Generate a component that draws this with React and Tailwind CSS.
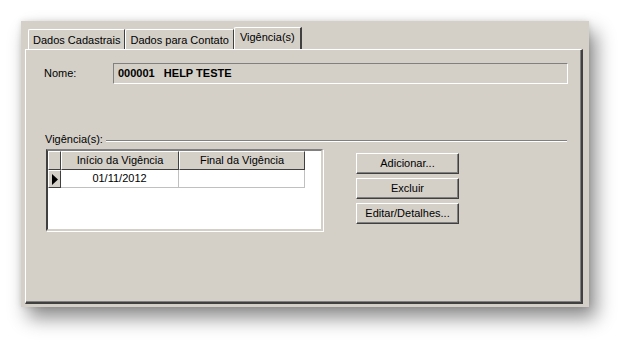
import React from "react";

const font = { fontFamily: '"Liberation Sans", Arial, sans-serif' };

function Tab({ label, active }) {
  if (active)
    return (
      <div className="relative z-10 -ml-[2px] h-[22px] px-[5px] pt-[1px] bg-[#d4d0c8] border-t border-l border-white border-r-2 border-r-[#404040] rounded-tl-[2px] text-[11px] leading-[16px]">
        {label}
      </div>
    );
  return (
    <div className="mt-[2px] h-[20px] px-[4px] pt-[3px] bg-[#d4d0c8] border-t border-l border-white border-r border-r-[#404040] rounded-tl-[2px] text-[11px] leading-[14px]">
      {label}
    </div>
  );
}

function Button({ children }) {
  return (
    <div className="w-[103px] h-[21px] flex items-center justify-center bg-[#d4d0c8] border-t border-l border-white border-b border-r border-b-[#404040] border-r-[#404040] shadow-[inset_-1px_-1px_0_#808080] text-[11px]">
      {children}
    </div>
  );
}

export default function App() {
  return (
    <div className="w-[630px] h-[349px] bg-white pl-[21px] pt-[21px] text-black" style={font}>
      <div className="w-[568px] h-[286px] bg-[#d4d0c8] pt-[6px] pl-[4px] pr-[6px] shadow-[7px_11px_18px_rgba(0,0,0,0.45),0_0_6px_rgba(0,0,0,0.12)]">
        <div className="flex pl-[3px] h-[22px]">
          <Tab label="Dados Cadastrais" />
          <Tab label="Dados para Contato" />
          <div className="ml-[2px]"><Tab label="Vigência(s)" active /></div>
        </div>

        <div className="h-[255px] border-t border-l border-white border-r-2 border-b-2 border-r-[#404040] border-b-[#404040] shadow-[inset_-1px_-1px_0_#808080]">
          <div className="flex items-center mt-[13px] pl-[18px]">
            <span className="w-[69px] text-[11px]">Nome:</span>
            <div className="w-[455px] h-[21px] flex items-center pl-[4px] border-t border-l border-[#808080] border-b border-r border-b-white border-r-white text-[11px] font-bold">
              000001&nbsp;&nbsp;&nbsp;HELP TESTE
            </div>
          </div>

          <div className="flex items-center mt-[49px] pl-[19px] pr-[14px]">
            <span className="text-[11px] leading-[13px]">Vigência(s):</span>
            <div className="flex-1 ml-[3px] mt-[2px] h-[2px] border-t border-[#808080] border-b border-b-white" />
          </div>

          <div className="flex items-start mt-[3px] pl-[20px]">
            <div className="w-[277px] h-[82px] bg-white border-t-2 border-l-2 border-t-[#808080] border-l-[#404040] border-b-2 border-r-2 border-b-[#d4d0c8] border-r-[#d4d0c8] shadow-[1px_1px_0_#ffffff]">
              <div className="flex h-[19px] text-[11px]">
                <div className="w-[13px] bg-[#d4d0c8] border-t border-l border-white border-b border-r border-b-[#404040] border-r-[#404040]" />
                <div className="w-[118px] flex items-center justify-center bg-[#d4d0c8] border-t border-l border-white border-b border-r border-b-[#404040] border-r-[#404040]">
                  Início da Vigência
                </div>
                <div className="w-[126px] flex items-center justify-center bg-[#d4d0c8] border-t border-l border-white border-b border-r border-b-[#404040] border-r-[#404040]">
                  Final da Vigência
                </div>
              </div>
              <div className="flex h-[18px] text-[11px]">
                <div className="w-[13px] flex items-center justify-center bg-[#d4d0c8] border-t border-l border-white border-b border-r border-b-[#404040] border-r-[#404040]">
                  <svg width="6" height="11" viewBox="0 0 6 11"><path d="M0 0 L6 5.5 L0 11 Z" fill="#000" /></svg>
                </div>
                <div className="w-[118px] flex items-center justify-center border-b border-r border-[#c0c0c0]">01/11/2012</div>
                <div className="w-[126px] border-b border-r border-[#c0c0c0]" />
              </div>
            </div>

            <div className="ml-[33px] mt-[4px] flex flex-col gap-[4px]">
              <Button>Adicionar...</Button>
              <Button>Excluir</Button>
              <Button>Editar/Detalhes...</Button>
            </div>
          </div>
        </div>
      </div>
    </div>
  );
}
